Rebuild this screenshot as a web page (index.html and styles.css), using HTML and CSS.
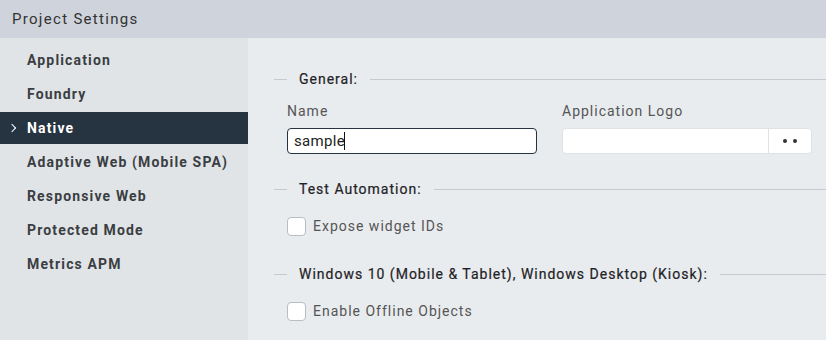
FILE: index.html
```html
<!DOCTYPE html>
<html lang="en">
<head>
  <meta charset="UTF-8">
  <title>Project Settings</title>
  <link rel="stylesheet" href="styles.css">
</head>
<body>
  <div class="header">Project Settings</div>

  <div class="layout">
    <ul class="sidebar">
      <li class="nav-item">Application</li>
      <li class="nav-item">Foundry</li>
      <li class="nav-item active">Native</li>
      <li class="nav-item">Adaptive Web (Mobile SPA)</li>
      <li class="nav-item">Responsive Web</li>
      <li class="nav-item">Protected Mode</li>
      <li class="nav-item">Metrics APM</li>
    </ul>

    <div class="main">
      <div class="section-title general"><span>General:</span></div>
      <div class="fields">
        <div class="field">
          <label>Name</label>
          <div class="text-input focused">sample<span class="caret"></span></div>
        </div>
        <div class="field">
          <label>Application Logo</label>
          <div class="text-input picker">
            <span class="picker-value"></span>
            <span class="picker-btn"><i class="dot"></i><i class="dot"></i></span>
          </div>
        </div>
      </div>

      <div class="section-title automation"><span>Test Automation:</span></div>
      <div class="check-row first">
        <span class="checkbox"></span>
        <span class="check-label">Expose widget IDs</span>
      </div>

      <div class="section-title windows"><span>Windows 10 (Mobile &amp; Tablet), Windows Desktop (Kiosk):</span></div>
      <div class="check-row">
        <span class="checkbox"></span>
        <span class="check-label">Enable Offline Objects</span>
      </div>
    </div>
  </div>
</body>
</html>
```

FILE: styles.css
```css
* { box-sizing: border-box; }
body {
  margin: 0; width: 826px; height: 340px; overflow: hidden;
  font-family: Roboto, "Liberation Sans", sans-serif;
  background: #e9ecef;
}

.header {
  height: 38px; line-height: 38px; padding-left: 12px;
  background: #cfd4dc; color: #333;
  font-size: 15px; letter-spacing: 1.3px;
}

.layout { display: flex; height: 302px; }

.sidebar {
  width: 248px; margin: 0; padding: 6px 0 0; list-style: none;
  background: #e1e4e7;
}
.nav-item {
  position: relative;
  height: 32px; line-height: 32px; margin-bottom: 2px; padding-left: 27px;
  font-size: 14px; font-weight: 700; letter-spacing: 1.15px; color: #3a3e42;
}
.nav-item.active { background: #263340; color: #fff; }
.nav-item.active::before {
  content: ""; position: absolute; left: 9px; top: 13px;
  width: 5px; height: 5px;
  border-top: 1.5px solid #fff; border-right: 1.5px solid #fff;
  transform: rotate(45deg);
}

.main { flex: 1; padding: 31px 0 0 26px; color: #222; }

.section-title {
  display: flex; align-items: center;
  height: 20px; font-size: 14px; letter-spacing: 1px; color: #1f2226;
  -webkit-text-stroke: 0.2px #1f2226;
}
.section-title::before {
  content: ""; width: 13px; height: 1px; background: #c6cace;
}
.section-title span { padding: 0 12px; }
.section-title::after {
  content: ""; flex: 1; height: 1px; background: #c6cace;
}
.section-title.automation { margin-top: 25px; }
.section-title.windows { margin-top: 28px; }

.fields {
  display: grid; grid-template-columns: 250px 250px; column-gap: 25px;
  margin: 12px 0 0 13px;
}
.field label {
  display: block; height: 20px; line-height: 20px; margin-bottom: 7px;
  font-size: 14px; letter-spacing: 1px; color: #555;
}
.text-input {
  display: flex; align-items: center;
  height: 26px; padding-left: 6px;
  background: #fff; border: 1px solid #e0e3e6; border-radius: 4px;
  font-size: 15px; color: #222; letter-spacing: 0.3px;
}
.text-input.focused { border-color: #263340; }
.caret { width: 1px; height: 18px; background: #111; margin-left: -1px; }
.picker { padding: 0; }
.picker-value { flex: 1; }
.picker-btn {
  display: flex; align-items: center; justify-content: center; gap: 6px;
  width: 43px; height: 100%;
  border-left: 1px solid #e0e3e6;
}
.dot { width: 4px; height: 4px; border-radius: 50%; background: #333; }

.check-row {
  display: flex; align-items: center; gap: 7px;
  height: 20px; margin: 17px 0 0 13px;
}
.checkbox {
  width: 19px; height: 19px;
  background: #fff; border: 1px solid #b9bdc1; border-radius: 4px;
}
.check-label { font-size: 14px; letter-spacing: 1px; color: #555; }
```
